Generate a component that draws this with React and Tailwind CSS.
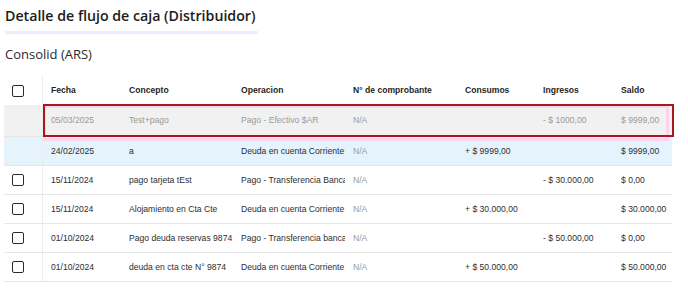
import React from "react";

const cols = "grid grid-cols-[39px_78px_112px_112px_112px_78px_78px_59px]";

const Check = () => (
  <div className="w-[12px] h-[12px] border-[1.5px] border-[#2a2a2a] rounded-[2px] bg-white" />
);

const rows = [
  { f: "24/02/2025", c: "a", o: "Deuda en cuenta Corriente", n: "N/A", cons: "+ $ 9999,00", ing: "", s: "$ 9999,00", blue: true },
  { f: "15/11/2024", c: "pago tarjeta tEst", o: "Pago - Transferencia Bancaria", n: "N/A", cons: "", ing: "- $ 30.000,00", s: "$ 0,00" },
  { f: "15/11/2024", c: "Alojamiento en Cta Cte", o: "Deuda en cuenta Corriente", n: "N/A", cons: "+ $ 30.000,00", ing: "", s: "$ 30.000,00" },
  { f: "01/10/2024", c: "Pago deuda reservas 9874", o: "Pago - Transferencia bancaria", n: "N/A", cons: "", ing: "- $ 50.000,00", s: "$ 0,00" },
  { f: "01/10/2024", c: "deuda en cta cte N° 9874", o: "Deuda en cuenta Corriente", n: "N/A", cons: "+ $ 50.000,00", ing: "", s: "$ 50.000,00" },
];

const Cell = ({ children, className = "" }) => (
  <div className={"pl-[8px] overflow-hidden whitespace-nowrap flex items-center " + className}>{children}</div>
);

export default function App() {
  return (
    <div className="w-[688px] h-[289px] bg-white overflow-hidden relative">
      <div className="pl-[5px] pt-[6px]">
        <div className="text-[14.2px] leading-[20px] font-semibold text-[#1c1c1c] font-['Open_Sans',sans-serif]">
          Detalle de flujo de caja (Distribuidor)
        </div>
        <div className="mt-[5px] h-[3px] w-[253px] bg-[#e9f0fd]" />
        <div className="mt-[10px] text-[13px] leading-[20px] text-[#2a2a2a] font-['Open_Sans',sans-serif]">
          Consolid (ARS)
        </div>
      </div>

      <div className="ml-[4px] mt-[12px] w-[668px] relative font-['Liberation_Sans',Arial,sans-serif] text-[8.6px]">
        <div className={cols + " h-[29px] font-bold text-[#1f1f1f]"}>
          <div className="border-r border-[#ececec] flex items-center pl-[8px]"><Check /></div>
          <Cell>Fecha</Cell>
          <Cell>Concepto</Cell>
          <Cell>Operacion</Cell>
          <Cell>N° de comprobante</Cell>
          <Cell>Consumos</Cell>
          <Cell>Ingresos</Cell>
          <Cell>Saldo</Cell>
        </div>
        <div className={cols + " h-[32px] bg-[#f1f1f1] text-[#9a9a9a] border-b border-[#e6e6e6]"}>
          <div className="border-r border-[#ececec]" />
          <Cell>05/03/2025</Cell>
          <Cell>Test+pago</Cell>
          <Cell>Pago - Efectivo $AR</Cell>
          <Cell>N/A</Cell>
          <Cell></Cell>
          <Cell>- $ 1000,00</Cell>
          <Cell>$ 9999,00</Cell>
        </div>
        {rows.map((r, i) => (
          <div
            key={i}
            className={cols + " h-[29px] text-[#2e2e2e] border-b border-[#e6e6e6] " + (r.blue ? "bg-[#e5f3fd]" : "bg-white")}
          >
            <div className="border-r border-[#ececec] flex items-center pl-[8px]">{r.blue ? null : <Check />}</div>
            <Cell>{r.f}</Cell>
            <Cell>{r.c}</Cell>
            <Cell>{r.o}</Cell>
            <Cell className="text-[#9a9a9a]">{r.n}</Cell>
            <Cell>{r.cons}</Cell>
            <Cell>{r.ing}</Cell>
            <Cell>{r.s}</Cell>
          </div>
        ))}
        <div className="absolute left-[39px] top-[29px] w-[626px] h-[36px] border-[3px] border-[#fdd3ef] pointer-events-none" />
        <div className="absolute left-[39px] top-[28px] w-[631px] h-[33px] border-2 border-[#a3191d] pointer-events-none" />
      </div>
    </div>
  );
}
